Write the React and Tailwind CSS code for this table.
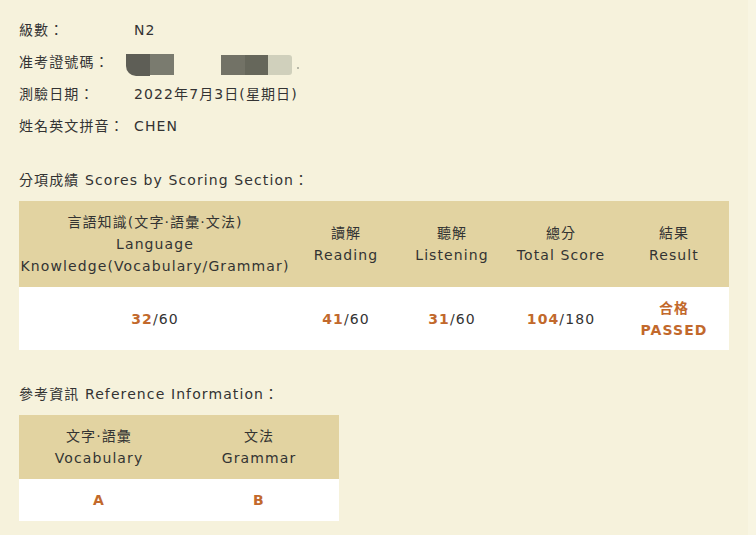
const INFO = [
  { label: '級數：', value: 'N2' },
  { label: '准考證號碼：', value: null },
  { label: '測驗日期：', value: '2022年7月3日(星期日)' },
  { label: '姓名英文拼音：', value: 'CHEN' },
]

const SCORES = [
  { w: 'w-[272px]', head: ['言語知識(文字·語彙·文法)', 'Language', 'Knowledge(Vocabulary/Grammar)'], score: '32', max: '60' },
  { w: 'w-[110px]', head: ['讀解', 'Reading'], score: '41', max: '60' },
  { w: 'w-[102px]', head: ['聽解', 'Listening'], score: '31', max: '60' },
  { w: 'w-[116px]', head: ['總分', 'Total Score'], score: '104', max: '180' },
]

function Redacted() {
  return (
    <div className="flex items-center -ml-[8px] mt-[6px]">
      <div className="flex h-[22px]">
        <div className="w-[24px] h-[22px] bg-[#5e5e56] rounded-bl-[10px]" />
        <div className="w-[24px] h-[21px] bg-[#7a7b6f]" />
      </div>
      <div className="flex h-[20px] ml-[47px]">
        <div className="w-[24px] bg-[#727266]" />
        <div className="w-[23px] bg-[#66675b]" />
        <div className="w-[24px] bg-[#d0d0bc] rounded-r-[3px]" />
      </div>
      <div className="w-[2px] h-[2px] ml-[5px] mt-[6px] bg-[#b8b8a8]" />
    </div>
  )
}

export default function App() {
  const font = "font-['DejaVu_Sans','Noto_Sans_CJK_TC',sans-serif]"
  return (
    <div className="flex w-[756px] h-[535px] bg-[#f8f5e2]">
      <div className={`w-[748px] h-full bg-[#f6f2dc] text-[#333] text-[14px] tracking-[1.1px] ${font} pl-[19px] pt-[14px]`}>
        {/* 基本資料 */}
        <div className="flex flex-col">
          {INFO.map((r) => (
            <div key={r.label} className="flex items-center h-[32px]">
              <div className="w-[115px]">{r.label}</div>
              {r.value ? <div>{r.value}</div> : <Redacted />}
            </div>
          ))}
        </div>

        <div className="mt-[27px] leading-[22px]">分項成績 Scores by Scoring Section：</div>
        <table className="mt-[10px] w-[710px] border-collapse table-fixed text-center leading-[22px]">
          <thead>
            <tr className="bg-[#e2d3a1] h-[86px]">
              {SCORES.map((c) => (
                <th key={c.head[1]} className={`${c.w} font-normal p-0`}>
                  {c.head.map((l) => <div key={l} className="whitespace-nowrap">{l}</div>)}
                </th>
              ))}
              <th className="w-[110px] font-normal p-0">
                <div>結果</div>
                <div>Result</div>
              </th>
            </tr>
          </thead>
          <tbody>
            <tr className="bg-white h-[63px]">
              {SCORES.map((c) => (
                <td key={c.head[1]} className="p-0">
                  <span className="font-bold text-[#c2692c]">{c.score}</span>/{c.max}
                </td>
              ))}
              <td className="p-0 font-bold text-[#c2692c]">
                <div>合格</div>
                <div>PASSED</div>
              </td>
            </tr>
          </tbody>
        </table>

        <div className="mt-[33px] leading-[22px]">參考資訊 Reference Information：</div>
        <table className="mt-[10px] w-[320px] border-collapse table-fixed text-center leading-[22px]">
          <thead>
            <tr className="bg-[#e2d3a1] h-[64px]">
              <th className="w-[160px] font-normal p-0">
                <div>文字·語彙</div>
                <div>Vocabulary</div>
              </th>
              <th className="w-[160px] font-normal p-0">
                <div>文法</div>
                <div>Grammar</div>
              </th>
            </tr>
          </thead>
          <tbody>
            <tr className="bg-white h-[42px] font-bold text-[#c2692c]">
              <td className="p-0">A</td>
              <td className="p-0">B</td>
            </tr>
          </tbody>
        </table>
      </div>
    </div>
  )
}
